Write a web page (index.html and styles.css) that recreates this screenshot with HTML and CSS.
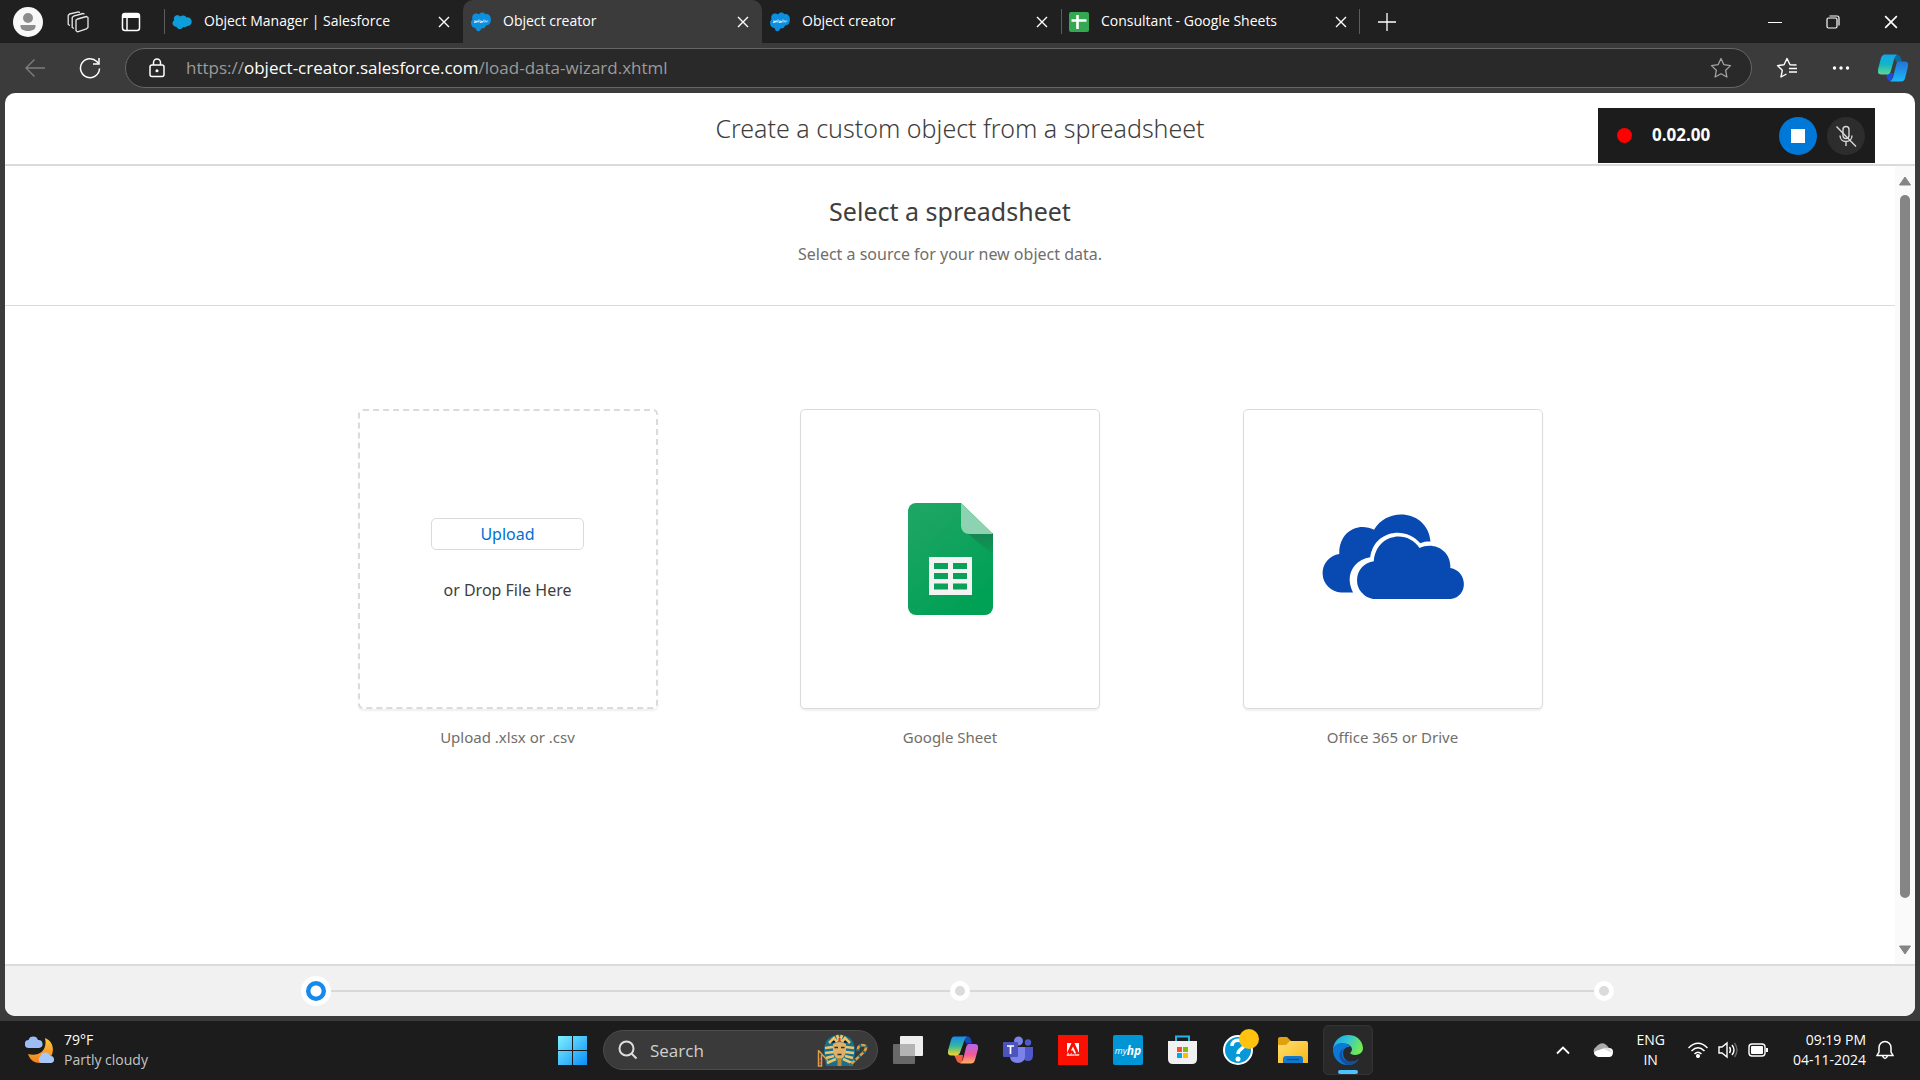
FILE: index.html
```html
<!DOCTYPE html>
<html lang="en">
<head>
<meta charset="utf-8">
<title>Object creator</title>
<link rel="stylesheet" href="styles.css">
</head>
<body>
<svg class="defs" aria-hidden="true">
  <defs>
    <symbol id="cloud" viewBox="0 0 20 20"><path d="M8.3 4.6a4 4 0 0 1 6.200.800 4.300 4.300 0 0 1 5.200 4.300c0 2.800-2.400 4.600-4.900 4.200-.9 1.500-2.500 1.700-3.700 1.100-1.500 2.800-5.400 2.700-6.700-.3A3.600 3.600 0 0 1 .5 11.100c0-1.300.7-2.300 1.700-2.900C1.200 5.600 2.700 3.200 5.200 3.200c1.300 0 2.400.5 3.100 1.400z" fill="#0d9dda"/></symbol>
    <symbol id="cloudmark" viewBox="0 0 20 20"><path d="M8 2.500C10-.3 13 0 14.300 2.200 17.500 1.500 20 4 19.900 7.500c0 4-2 6-4.900 5.900-.7 2.300-2.300 3.500-4.200 2.700C9 20.500 5.500 20 4.400 16 1.700 15.800 0 13.600 0 11c0-1.500.5-2.500 1.500-3.400C.5 4.500 2 1.400 4.800 1.400c1.300 0 2.400.3 3.200 1.100z" fill="#0d8fe0"/><path d="M3 10.500h1.500V9H3m2.500 1.500V9H7v1.500m1-3v3m1-1.500h1.500v1.500H9m2.500 0V9M13 7.500v3m1-1.500h1.200v1.500m1-1.500h1" stroke="#e6f4fc" stroke-width=".9" fill="none"/></symbol>
    <symbol id="x" viewBox="0 0 12 12"><path d="M1 1l10 10M11 1L1 11" stroke="#fff" stroke-width="1.400" fill="none"/></symbol>
  </defs>
</svg>

<header class="browser">
  <div class="tabstrip">
    <div class="tab-tools">
      <button class="icon-btn" aria-label="Profile"><svg width="30" height="30" viewBox="0 0 30 30"><circle cx="15" cy="15" r="15" fill="#f8f8f8"/><circle cx="15" cy="11" r="5" fill="#8c8c8c"/><path d="M7.500 18h15v1.500c0 6-15 6-15 0z" fill="#8c8c8c"/></svg></button>
      <button class="icon-btn" aria-label="Workspaces"><svg width="22" height="22" viewBox="0 0 22 22" fill="none" stroke="#e8e8e8" stroke-width="1.300" stroke-linejoin="round"><path d="M10.500 8l9-2.500 1.500 1v10l-1.500 1.300-9 3-1.500-1V9z"/><path d="M7 17.500L5.200 16.500V6.500L6.500 5.200l9.500-2.700 1.500.7"/><path d="M3 14.500L1.200 13.500V4.500l1.300-1.500L11.500.8l1.500.7"/></svg></button>
      <button class="icon-btn" aria-label="Tab actions"><svg width="20" height="20" viewBox="0 0 20 20" fill="none" stroke="#fff" stroke-width="1.500"><rect x="1.500" y="1.500" width="17" height="17" rx="2.500"/><path d="M2 4h16" stroke-width="4"/><path d="M6 5v13"/></svg></button>
    </div>
    <nav class="tabs" aria-label="Tabs">
      <div class="tab tab-ruled"><svg class="favicon"><use href="#cloud"/></svg><a href="#manager">Object Manager | Salesforce</a><button class="close" aria-label="Close tab"><svg width="12" height="12"><use href="#x"/></svg></button></div>
      <div class="tab tab-active"><svg class="favicon"><use href="#cloudmark"/></svg><a href="#creator">Object creator</a><button class="close" aria-label="Close tab"><svg width="12" height="12"><use href="#x"/></svg></button></div>
      <div class="tab"><svg class="favicon"><use href="#cloudmark"/></svg><a href="#creator-2">Object creator</a><button class="close" aria-label="Close tab"><svg width="12" height="12"><use href="#x"/></svg></button></div>
      <div class="tab tab-ruled"><svg class="favicon" viewBox="0 0 20 20"><rect width="20" height="20" rx="2" fill="#34a853"/><path d="M8.500 3v14M2.500 8.500h15" stroke="#fff" stroke-width="2.600"/></svg><a href="#sheets">Consultant - Google Sheets</a><button class="close" aria-label="Close tab"><svg width="12" height="12"><use href="#x"/></svg></button></div>
    </nav>
    <button class="icon-btn new-tab" aria-label="New tab"><svg width="18" height="18" viewBox="0 0 18 18"><path d="M9 0v18M0 9h18" stroke="#fff" stroke-width="1.300"/></svg></button>
    <div class="window-buttons">
      <button class="icon-btn" aria-label="Minimize"><svg width="14" height="14" viewBox="0 0 14 14"><path d="M0 7.500h14" stroke="#fff"/></svg></button>
      <button class="icon-btn" aria-label="Restore"><svg width="14" height="14" viewBox="0 0 14 14" fill="none" stroke="#fff" stroke-width="1.200"><rect x="1" y="3" width="10" height="10" rx="1.500"/><path d="M3.500 1H11q2 0 2 2v7.500"/></svg></button>
      <button class="icon-btn" aria-label="Close"><svg width="14" height="14"><use href="#x"/></svg></button>
    </div>
  </div>
  <div class="toolbar">
    <button class="icon-btn" aria-label="Back"><svg width="20" height="18" viewBox="0 0 20 18" fill="none" stroke="#7d7d7d" stroke-width="1.400"><path d="M20 9H1M9.500.5L1 9l8.500 8.500"/></svg></button>
    <button class="icon-btn" aria-label="Refresh"><svg width="22" height="22" viewBox="0 0 22 22" fill="none" stroke="#fff" stroke-width="1.500"><path d="M20.500 11.500A9.500 9.500 0 1 1 17.800 4.500L19.500 6.500"/><path d="M20 1v6h-6"/></svg></button>
    <div class="address">
      <svg width="16" height="20" viewBox="0 0 16 20" fill="none" stroke="#fff" stroke-width="1.500"><rect x="1" y="7" width="14" height="11.500" rx="2"/><path d="M4.500 7V4.500a3.500 3.500 0 0 1 7 0V7"/><circle cx="8" cy="12.800" r=".8" fill="#fff"/></svg>
      <a class="url" href="#address">https://<b>object-creator.salesforce.com</b>/load-data-wizard.xhtml</a>
      <button class="icon-btn" aria-label="Add to favourites"><svg width="22" height="22" viewBox="0 0 22 22" fill="none" stroke="#a2a2a2" stroke-width="1.300" stroke-linejoin="round"><path d="M11 1.500l2.900 6.200 6.600.9-4.800 4.700 1.200 6.700-5.900-3.200L5.100 20l1.200-6.700L1.500 8.600l6.600-.9z"/></svg></button>
    </div>
    <div class="toolbar-end">
      <button class="icon-btn" aria-label="Favourites"><svg width="22" height="22" viewBox="0 0 22 22" fill="none" stroke="#fff" stroke-width="1.400" stroke-linejoin="round"><path d="M20.500 8L14 7.700 11 1.500 8 7.700l-6.500.9 4.800 4.700L5 20l5.500-3M13 11.500h8M13 15h8"/></svg></button>
      <button class="icon-btn" aria-label="Settings and more"><svg width="18" height="6" viewBox="0 0 18 6" fill="#fff"><circle cx="2.500" cy="3" r="1.700"/><circle cx="9" cy="3" r="1.700"/><circle cx="15.500" cy="3" r="1.700"/></svg></button>
      <button class="icon-btn" aria-label="Copilot"><svg width="30" height="28" viewBox="0 0 30 28"><defs><linearGradient id="ca" x2="0" y2="1"><stop stop-color="#10a5ec"/><stop offset=".5" stop-color="#16b5c6"/><stop offset="1" stop-color="#5ed88e"/></linearGradient><linearGradient id="cb" x2="0" y2="1"><stop stop-color="#2572d8"/><stop offset="1" stop-color="#19b9f8"/></linearGradient></defs><path d="M15 1h5q2 0 3 3l1 4h-6z" fill="#09699c"/><path d="M8 19h7l-1 8h-2q-3 0-4-8z" fill="#1d4cdd"/><path d="M7 .5h12q-2 1-3 5l-3 11q-1 4-4 4H3q-4 0-3-5L3 4Q4 .5 7 .5z" fill="url(#ca)"/><path d="M20 7.500h7q4 0 3 5l-3 12q-1 3-4 3H12q2-1 3-4l3-12q1-4 2-4z" fill="url(#cb)"/></svg></button>
    </div>
  </div>
</header>

<main class="page">
  <header class="page-header"><h1>Create a custom object from a spreadsheet</h1></header>
  <div class="scroller">
    <div class="content">
      <section class="intro">
        <h2>Select a spreadsheet</h2>
        <p>Select a source for your new object data.</p>
      </section>
      <section class="sources">
        <figure>
          <div class="card card-drop">
            <button class="upload">Upload</button>
            <p>or Drop File Here</p>
          </div>
          <figcaption>Upload .xlsx or .csv</figcaption>
        </figure>
        <figure>
          <button class="card" aria-label="Google Sheet">
            <svg width="86" height="112" viewBox="0 0 86 112"><defs><linearGradient id="ga" x2=".6" y2="1"><stop stop-color="#21a665"/><stop offset="1" stop-color="#00a055"/></linearGradient><linearGradient id="gs" x2="0" y2="1"><stop stop-color="#168451"/><stop offset="1" stop-color="#0a9d57"/></linearGradient></defs><path d="M9 0h45l32 31v73a8 8 0 0 1-8 8H9a8 8 0 0 1-8-8V8a8 8 0 0 1 8-8z" fill="url(#ga)"/><path d="M60 30h26v22z" fill="url(#gs)"/><path d="M54 0l32 31H62a8 8 0 0 1-8-8z" fill="#8ed3b1"/><path d="M22 54h43v38H22z" fill="#f3f3f3"/><path d="M27 60h14v6H27zm19 0h14v6H46zM27 70h14v6H27zm19 0h14v6H46zM27 80.500h14v6H27zm19 0h14v6H46z" fill="#0aa058"/></svg>
          </button>
          <figcaption>Google Sheet</figcaption>
        </figure>
        <figure>
          <button class="card" aria-label="Office 365 or Drive">
            <svg width="142" height="91" viewBox="0 0 142 91" fill="#094ab2"><path d="M31 78.500H19A19.300 19.300 0 0 1 17.300 40.100C16.500 18 36 7.500 52 15.800 66-8.500 106-3.500 108.500 27.600 104 27.600 101 28 98.300 29.300 84 11.500 52 16 48.200 43.200 31 46 22.500 62 31 78.500z"/><path d="M51 85A19.100 19.100 0 0 1 51.800 47.200C54 20 85 14.500 97.500 34c15-7 32 3 30.800 20 18 3 18 29 .7 31z"/></svg>
          </button>
          <figcaption>Office 365 or Drive</figcaption>
        </figure>
      </section>
    </div>
    <div class="scrollbar" aria-hidden="true">
      <svg width="14" height="10" viewBox="0 0 14 10"><path d="M7 1l5.500 8h-11z" fill="#858585" stroke="#858585" stroke-linejoin="round"/></svg>
      <div class="thumb"></div>
      <svg width="14" height="10" viewBox="0 0 14 10"><path d="M7 9l5.500-8h-11z" fill="#858585" stroke="#858585" stroke-linejoin="round"/></svg>
    </div>
  </div>
  <footer class="progress">
    <ol><li class="current"></li><li></li><li></li></ol>
  </footer>
  <aside class="recorder">
    <span class="rec-dot"></span>
    <span class="rec-time">0.02.00</span>
    <button class="rec-stop" aria-label="Stop recording"><span></span></button>
    <button class="rec-mic" aria-label="Microphone off"><svg width="22" height="22" viewBox="0 0 22 22" fill="none" stroke="#d8d8d8" stroke-width="1.400"><rect x="8" y="1.500" width="6" height="12" rx="3"/><path d="M5 10.500c0 8 12 8 12 0M11 17v4M1.500 1.500l19.500 20"/></svg></button>
  </aside>
</main>

<footer class="taskbar">
  <button class="weather">
    <svg width="30" height="28" viewBox="0 0 30 28"><defs><linearGradient id="mo" x2="0" y2="1"><stop stop-color="#ffc83a"/><stop offset="1" stop-color="#f08019"/></linearGradient></defs><path d="M20 2c13 5 9 25-5 25C9 27 5 24 3 18c10 3 20-3 17-16z" fill="url(#mo)"/><path d="M4 12a4 4 0 0 1-.5-8A5 5 0 0 1 13 4a4 4 0 0 1 1 8z" fill="#9dbdf5"/><path d="M16 27a4 4 0 0 1-.5-7A5 5 0 0 1 25 20a3.500 3.500 0 0 1 1 7z" fill="#a9c8fa"/></svg>
    <span class="stack"><span>79°F</span><span class="dim">Partly cloudy</span></span>
  </button>
  <div class="apps">
    <button class="app" aria-label="Start"><svg width="30" height="30" viewBox="0 0 30 30"><defs><linearGradient id="wi" x2="1" y2="1"><stop stop-color="#7ff0ff"/><stop offset="1" stop-color="#0a8ff8"/></linearGradient></defs><path d="M0 1h14v14H0zM15 1h14v14H15zM0 16h14v14H0zM15 16h14v14H15z" fill="url(#wi)"/></svg></button>
    <label class="search">
      <svg width="20" height="20" viewBox="0 0 20 20" fill="none" stroke="#ddd" stroke-width="2"><circle cx="8.500" cy="8.500" r="7"/><path d="M13.500 13.500l5 5"/></svg>
      <input type="text" placeholder="Search" aria-label="Search">
      <svg width="52" height="34" viewBox="0 0 52 34"><path d="M9 33L7 21Q6 2 22.500 2T38 21l-2 12z" fill="#17708f"/><path d="M12 10l5-5 3 4M33 10l-5-5-3 4M8 15l8-1M37 15l-8-1M8 20l9-1M37 20l-9-1M9 25l8-2M36 25l-8-2M10 30l9-4M35 30l-9-4M20 2l2 6M25 2l-2 6" stroke="#eac46c" stroke-width="2.600"/><path d="M16 11q6.500-4 13 0v7q-1 7-6.500 9-5.500-2-6.500-9z" fill="#dfb066"/><path d="M17.500 14.500h3.500M24 14.500h3.500M20.500 21.500h4" stroke="#332d2c" stroke-width="1.300"/><path d="M20.500 25h4v8h-4z" fill="#bd8b36"/><path d="M22.500 5v4" stroke="#c9402f" stroke-width="2"/><path d="M33 32l14-13q5-7-2-7-5 1-4 6" stroke="#d6a04b" stroke-width="2.600" fill="none"/><path d="M33 32l14-13q5-7-2-7-5 1-4 6" stroke="#176e8c" stroke-width="2.600" stroke-dasharray="2 4" fill="none"/><path d="M1.500 17v16h3V22M2 18l9 10" stroke="#d6a04b" stroke-width="1.500" fill="none"/><path d="M3 25v8" stroke="#c34935" stroke-width="2" stroke-dasharray="2 2"/></svg>
    </label>
    <button class="app" aria-label="Task view"><svg width="30" height="30" viewBox="0 0 30 30"><rect y="9" width="22" height="20" rx="1" fill="#686868"/><rect x="7" y="1" width="23" height="20" rx="1" fill="#eee"/><path d="M7 9h15v12H7z" fill="#b4b4b4"/></svg></button>
    <button class="app" aria-label="Copilot"><svg width="30" height="28" viewBox="0 0 30 28"><defs><linearGradient id="pa" x2="0" y2="1"><stop stop-color="#168bf0"/><stop offset=".5" stop-color="#34b89b"/><stop offset="1" stop-color="#f8d728"/></linearGradient><linearGradient id="pb" x2="0" y2="1"><stop stop-color="#b265ee"/><stop offset=".55" stop-color="#f05a98"/><stop offset="1" stop-color="#ffb25b"/></linearGradient></defs><path d="M15 .5h5q2 0 3 3l1 4h-6z" fill="#1548b8"/><path d="M6 19h9l-1 8h-2q-3 0-4-4z" fill="#ed6140"/><path d="M6 .5h13q-2 1-3 5l-4 11q-1 3-4 3H3q-4 0-3-5L3 4Q4 .5 6 .5z" fill="url(#pa)"/><path d="M20 8h7q4 0 3 5l-3 11q-1 3.500-4 3.500H12q2-1 3-4l3-12q1-3.500 2-3.500z" fill="url(#pb)"/></svg></button>
    <button class="app" aria-label="Teams"><svg width="30" height="28" viewBox="0 0 30 28"><circle cx="15.500" cy="5" r="4.500" fill="#7b83eb"/><circle cx="25" cy="6.500" r="3.200" fill="#5059c9"/><path d="M20 11h10v8q0 6-5 6t-5-5z" fill="#5059c9"/><path d="M7 11h15v9q0 7-7.500 7T7 20z" fill="#7b83eb"/><rect y="6" width="15" height="15" rx="1" fill="#4b53bc"/><path d="M4 10h7M7.500 10v8" stroke="#fff" stroke-width="1.700"/></svg></button>
    <button class="app" aria-label="Adobe"><span class="tile tile-adobe"><svg width="12" height="10" viewBox="0 0 12 10" fill="#fff"><path d="M0 0h4.500L0 10zM7.500 0H12v10zM6 3.500L9 10H7L6 7.500H4z"/></svg><small>Adobe</small></span></button>
    <button class="app" aria-label="myHP"><span class="tile tile-hp">my<b>hp</b></span></button>
    <button class="app" aria-label="Store"><svg width="30" height="30" viewBox="0 0 30 30"><path d="M8 6V1.500h13V6" fill="none" stroke="#27b3e9" stroke-width="2"/><path d="M0 6h29v18q0 5-5 5H5q-5 0-5-5z" fill="#f1f1f1"/><path d="M9 12h5v5H9z" fill="#f35325"/><path d="M15 12h5v5h-5z" fill="#81bc06"/><path d="M9 18h5v5H9z" fill="#05a6f0"/><path d="M15 18h5v5h-5z" fill="#ffba08"/></svg></button>
    <button class="app" aria-label="Support"><svg class="overflow" width="30" height="30" viewBox="0 0 30 30"><circle cx="15" cy="15" r="14" fill="#0799d7" stroke="#fff" stroke-width="2"/><path d="M9 11c0-8 12-7 12-1 0 4-6 4-6 9" fill="none" stroke="#fff" stroke-width="3.500"/><circle cx="15" cy="24" r="2.500" fill="#fff"/><circle cx="26" cy="4" r="10" fill="#ffc20e"/></svg></button>
    <button class="app" aria-label="File Explorer"><svg width="30" height="28" viewBox="0 0 30 28"><defs><linearGradient id="fo" x2="1" y2="1"><stop stop-color="#ffdf70"/><stop offset="1" stop-color="#f8b718"/></linearGradient></defs><path d="M0 3q0-2 2-2h7l4 4v5H0z" fill="#dfa10d"/><path d="M0 9h8l4-4h16q2 0 2 2v20H0z" fill="url(#fo)"/><path d="M5 27v-4q0-3 3-3h14q3 0 3 3v4z" fill="#1278cc"/><path d="M9 23.500h12" stroke="#0a4f93" stroke-width="1.300"/></svg></button>
    <button class="app app-active" aria-label="Microsoft Edge"><svg width="30" height="30" viewBox="0 0 30 30"><defs><linearGradient id="ea" x2="1" y2=".3"><stop stop-color="#1ba5e8"/><stop offset=".5" stop-color="#2fc4d8"/><stop offset="1" stop-color="#70ea55"/></linearGradient></defs><path d="M0 14C2-5 29-4 30 13c0 7-8 8-12 6-2-1 1-2 1-5C18 8 8 6 0 14z" fill="url(#ea)"/><path d="M0 14C3 6 14 7 18 12c-6-2-11 6-6 12 3 4 9 4 14 0-8 12-27 5-26-10z" fill="#0c78d5"/><path d="M11 13c-6 9 2 18 15 11-3 5-8 6-11 6C5 27 4 17 11 13z" fill="#154f9c"/></svg></button>
  </div>
  <div class="tray">
    <button class="icon-btn" aria-label="Show hidden icons"><svg width="14" height="9" viewBox="0 0 14 9"><path d="M1 7.500l6-6 6 6" fill="none" stroke="#fff" stroke-width="1.800"/></svg></button>
    <button class="icon-btn" aria-label="OneDrive"><svg width="20" height="14" viewBox="0 0 20 14"><path d="M3 12A4.500 4.500 0 0 1 3 4Q10-4 16 5l-6 5z" fill="#aaa"/><path d="M3 13q-4-3 0-5l6-2 7-1q4 0 4 4 0 5-4 5H5z" fill="#fff"/><path d="M9 5q5-1 8 1l2 4z" fill="#ddd"/></svg></button>
    <button class="stack lang"><span>ENG</span><span>IN</span></button>
    <button class="status" aria-label="Network, sound and battery">
      <svg width="20" height="16" viewBox="0 0 20 16" fill="none" stroke="#fff" stroke-width="1.500"><path d="M.5 6q9.500-9.500 19 0M3.500 9q6.500-6.500 13 0M6.500 12q3.500-3.500 7 0"/><circle cx="10" cy="14" r="1.300" fill="#fff"/></svg>
      <svg width="20" height="18" viewBox="0 0 20 18" fill="none" stroke="#fff" stroke-width="1.400"><path d="M1 6h3l5-4v14l-5-4H1z"/><path d="M11.500 6q2 3 0 6M14 4q4 5 0 10"/><path d="M16.500 2q5 7 0 14" stroke="#666"/></svg>
      <svg width="20" height="14" viewBox="0 0 20 14"><rect x="1" y="1" width="16" height="12" rx="3" fill="none" stroke="#fff" stroke-width="1.400"/><rect x="3" y="3" width="12" height="8" rx="1" fill="#fff"/><path d="M19 5v4" stroke="#fff" stroke-width="2"/></svg>
    </button>
    <button class="stack clock"><span>09:19 PM</span><span>04-11-2024</span></button>
    <button class="icon-btn" aria-label="Notifications"><svg width="18" height="20" viewBox="0 0 18 20" fill="none" stroke="#fff" stroke-width="1.500"><path d="M3 12V7.500a6 6 0 0 1 12 0V12l2 3.500H1zM6.500 16q2.500 5 5 0"/></svg></button>
  </div>
</footer>
</body>
</html>
```
FILE: styles.css
```css
* { box-sizing: border-box; }
body {
  margin: 0;
  min-height: 100vh;
  display: flex;
  flex-direction: column;
  background: #3b3b3b;
  color: #fff;
  font-family: "Open Sans", "Noto Sans", sans-serif;
  font-size: 14px;
}
h1, h2, p, figure, ol { margin: 0; padding: 0; font-weight: 400; }
a { color: inherit; text-decoration: none; }
button { margin: 0; padding: 0; border: 0; background: none; color: inherit; font: inherit; }
svg { flex: none; display: block; }
.defs { width: 0; height: 0; position: absolute; }
.icon-btn { display: flex; align-items: center; justify-content: center; }

/* Browser chrome */
.tabstrip { display: flex; align-items: center; height: 43px; background: #202020; }
.tab-tools { display: flex; align-items: center; width: 164px; padding-left: 13px; }
.tab-tools .icon-btn + .icon-btn { margin-left: 24px; }
.tab-tools .icon-btn:last-child { margin-left: 32px; }
.tabs { display: flex; height: 43px; }
.tab { position: relative; display: flex; align-items: center; gap: 12px; width: 299px; padding: 0 13px 0 8px; }
.tab-ruled::before { content: ""; position: absolute; left: 0; top: 9px; width: 1px; height: 25px; background: #5c5c5c; }
.tab:last-child::after { content: ""; position: absolute; right: 0; top: 9px; width: 1px; height: 25px; background: #5c5c5c; }
.tab-active { background: #3b3b3b; border-radius: 10px 10px 0 0; }
.tab a { flex: 1; padding-bottom: 2px; }
.favicon { width: 20px; height: 20px; }
.new-tab { margin-left: 18px; }
.window-buttons { display: flex; gap: 44px; margin-left: auto; padding-right: 22px; }
.toolbar { display: flex; align-items: center; gap: 24px; height: 50px; padding: 0 12px 0 25px; }
.toolbar .address {
  flex: 1;
  display: flex;
  align-items: center;
  gap: 21px;
  height: 40px;
  padding: 0 19px 0 23px;
  border: 1px solid #666;
  border-radius: 20px;
  background: #292929;
}
.toolbar .icon-btn:nth-child(2) { margin-left: 10px; }
.url { flex: 1; padding-bottom: 2px; color: #9b9b9b; font-size: 17px; }
.url b { color: #fff; font-weight: 400; }
.toolbar-end { display: flex; align-items: center; gap: 28px; }
.toolbar-end .icon-btn:nth-child(2) { margin-left: 6px; }

/* Page */
.page {
  position: relative;
  flex: 1;
  display: flex;
  flex-direction: column;
  margin: 0 5px 5px;
  border-radius: 10px;
  background: #fff;
  color: #3e3e3c;
  overflow: hidden;
  font-family: "Noto Sans", sans-serif;
  font-size: 15px;
}
.page-header { padding: 17px 0 18px; border-bottom: 2px solid #dbdbdb; text-align: center; }
h1 { font-size: 25px; line-height: 36px; font-weight: 300; }
.scroller { flex: 1; display: flex; }
.content { flex: 1; }
.intro { padding: 26px 0 38px; border-bottom: 1px solid #dbdbdb; text-align: center; }
h2 { font-size: 25px; line-height: 38px; }
.intro p { padding-top: 11px; font-size: 16px; line-height: 26px; color: #706e6b; }
.sources { display: flex; justify-content: space-between; width: 100%; max-width: 1185px; margin: 0 auto; padding: 103px 0 40px; }
figure { display: flex; flex-direction: column; align-items: center; gap: 16px; }
figcaption { line-height: 24px; color: #706e6b; }
.card {
  display: flex;
  flex-direction: column;
  align-items: center;
  justify-content: center;
  gap: 28px;
  width: 300px;
  height: 300px;
  border: 1px solid #dbdbdb;
  border-radius: 5px;
  background: #fff;
  box-shadow: 0 2px 2px #00000010;
}
.card-drop { padding-top: 2px; border: 2px dashed #dbdbdb; font-size: 16px; }
.card-drop p { line-height: 24px; }
.upload { width: 153px; height: 32px; border: 1px solid #dbdbdb; border-radius: 5px; color: #0070d2; }
.scrollbar { display: flex; flex-direction: column; align-items: center; gap: 9px; width: 20px; padding: 10px 0 9px; background: #fafafa; }
.scrollbar .thumb { width: 10px; flex: 1; margin-bottom: 38px; border-radius: 5px; background: #858585; }
.progress { display: flex; justify-content: center; padding: 10px 0; border-top: 2px solid #dbdbdb; background: #f1f1f1; }
.progress ol {
  display: flex;
  align-items: center;
  justify-content: space-between;
  width: 69%;
  list-style: none;
  background: linear-gradient(#d8d8d8, #d8d8d8) center / 98% 2px no-repeat;
}
.progress li { width: 20px; height: 20px; margin: 5px; border: 5px solid #fff; border-radius: 50%; background: #dbdbdb; }
.progress .current { width: 30px; height: 30px; margin: 0; background: radial-gradient(circle, #fff 5px, #1589ee 6px); }
.recorder {
  position: absolute;
  top: 15px;
  right: 40px;
  display: flex;
  align-items: center;
  width: 277px;
  height: 55px;
  padding: 0 10px 0 19px;
  background: #1c1c1c;
  color: #fff;
}
.rec-dot { width: 15px; height: 15px; border-radius: 50%; background: #f00; }
.rec-time { flex: 1; padding: 0 0 2px 20px; font: 700 17px "Open Sans", sans-serif; }
.rec-stop, .rec-mic { display: flex; align-items: center; justify-content: center; width: 38px; height: 38px; border-radius: 50%; background: #0078d7; }
.rec-stop span { width: 14px; height: 14px; background: #fff; }
.rec-mic { margin-left: 10px; background: #2d2d2d; }

/* Taskbar */
.taskbar { display: grid; grid-template-columns: 1fr auto 1fr; align-items: center; height: 59px; padding-bottom: 1px; background: #1c1c1c; }
.stack { display: flex; flex-direction: column; line-height: 20px; }
.weather { display: flex; align-items: center; gap: 9px; padding-left: 25px; text-align: left; }
.dim { color: #c4c4c4; }
.apps { display: flex; align-items: center; gap: 5px; padding-left: 1px; }
.app { display: flex; align-items: center; justify-content: center; width: 50px; height: 50px; border-radius: 5px; }
.app-active { position: relative; background: #292929; border: 1px solid #333; }
.app-active::after { content: ""; position: absolute; bottom: 0; width: 20px; height: 4px; border-radius: 2px; background: #4cc2ff; }
.overflow { overflow: visible; }
.search { display: flex; align-items: center; gap: 12px; width: 275px; height: 40px; padding: 0 8px 0 14px; border: 1px solid #4c4c4c; border-radius: 20px; background: #3a3a3a; }
.search input { flex: 1; width: 40px; padding: 0; border: 0; background: none; color: #fff; font: inherit; font-size: 17px; }
.search input::placeholder { color: #d0d0d0; }
.tile { display: flex; align-items: center; justify-content: center; width: 30px; height: 30px; color: #fff; }
.tile-adobe { flex-direction: column; background: #fa0f00; }
.tile-adobe small { font-size: 4px; line-height: 4px; font-weight: 700; }
.tile-hp { border-radius: 2px; background: #0096d6; font-size: 9px; font-style: italic; }
.tile-hp b { font-size: 12px; }
.tray { display: flex; align-items: center; justify-content: flex-end; padding-right: 26px; }
.lang { align-items: center; padding: 0 23px; }
.tray .icon-btn:nth-child(2) { margin-left: 23px; }
.status { display: flex; align-items: center; gap: 10px; }
.clock { align-items: flex-end; padding: 0 10px 0 25px; }
```
